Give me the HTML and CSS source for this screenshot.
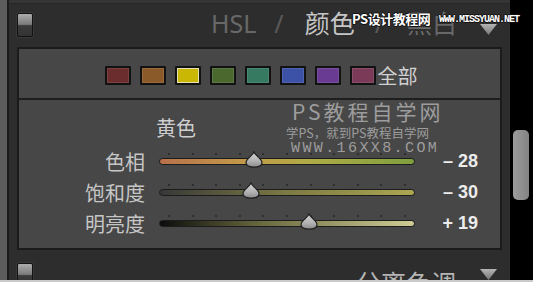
FILE: index.html
```html
<!DOCTYPE html>
<html lang="zh">
<head>
<meta charset="utf-8">
<title>HSL / 颜色 / 黑白</title>
<link rel="stylesheet" href="styles.css">
</head>
<body>
<svg class="defs" width="0" height="0" aria-hidden="true">
  <defs>
    <linearGradient id="thumbfill" x1="0" y1="0" x2="0" y2="1">
      <stop offset="0" stop-color="#d6d6d6"/>
      <stop offset="0.6" stop-color="#b2b2b2"/>
      <stop offset="1" stop-color="#8a8a8a"/>
    </linearGradient>
    <linearGradient id="caretfill" x1="0" y1="0" x2="0" y2="1">
      <stop offset="0" stop-color="#b4b4b4"/>
      <stop offset="1" stop-color="#767676"/>
    </linearGradient>
  </defs>
</svg>
<div class="screen">
  <div class="main">
    <div class="edge"></div>
    <div class="panel">
      <div class="topline"></div>
      <div class="head">
        <span class="toggle"></span>
        <div class="title">
          <span class="t dim">HSL</span>
          <span class="t slash s1">/</span>
          <span class="t on">颜色</span>
          <span class="t slash s2">/</span>
          <span class="t dim bw">黑白</span>
        </div>
        <svg class="caret" viewBox="0 0 17 11" width="17" height="11"><polygon points="0,0 17,0 8.5,11" fill="url(#caretfill)"/></svg>
      </div>
      <div class="box">
        <div class="swatches">
          <div class="swrow">
            <span class="sw c-red"></span>
            <span class="sw c-orange"></span>
            <span class="sw c-yellow sel"></span>
            <span class="sw c-green"></span>
            <span class="sw c-aqua"></span>
            <span class="sw c-blue"></span>
            <span class="sw c-purple"></span>
            <span class="sw c-magenta"></span>
          </div>
          <span class="all">全部</span>
        </div>
        <div class="sliders">
          <div class="group">黄色</div>
          <div class="row">
            <span class="label">色相</span>
            <div class="slider">
              <div class="ticks"><i></i><i></i><i></i><i></i><i></i><i></i><i></i><i></i><i></i><i></i><i></i></div>
              <div class="track hue"></div>
              <svg class="thumb" style="left:86px" viewBox="0 0 18 17" width="18" height="17"><path d="M9 0.8 C10 4.5 17 7.5 17 11.5 C17 14.5 13.5 16.2 9 16.2 C4.5 16.2 1 14.5 1 11.5 C1 7.5 8 4.5 9 0.8 Z" fill="url(#thumbfill)" stroke="#1e1e1e" stroke-width="1.2"/></svg>
            </div>
            <span class="value">– 28</span>
          </div>
          <div class="row">
            <span class="label">饱和度</span>
            <div class="slider">
              <div class="ticks"><i></i><i></i><i></i><i></i><i></i><i></i><i></i><i></i><i></i><i></i><i></i></div>
              <div class="track sat"></div>
              <svg class="thumb" style="left:83px" viewBox="0 0 18 17" width="18" height="17"><path d="M9 0.8 C10 4.5 17 7.5 17 11.5 C17 14.5 13.5 16.2 9 16.2 C4.5 16.2 1 14.5 1 11.5 C1 7.5 8 4.5 9 0.8 Z" fill="url(#thumbfill)" stroke="#1e1e1e" stroke-width="1.2"/></svg>
            </div>
            <span class="value">– 30</span>
          </div>
          <div class="row">
            <span class="label">明亮度</span>
            <div class="slider">
              <div class="ticks"><i></i><i></i><i></i><i></i><i></i><i></i><i></i><i></i><i></i><i></i><i></i></div>
              <div class="track lum"></div>
              <svg class="thumb" style="left:141px" viewBox="0 0 18 17" width="18" height="17"><path d="M9 0.8 C10 4.5 17 7.5 17 11.5 C17 14.5 13.5 16.2 9 16.2 C4.5 16.2 1 14.5 1 11.5 C1 7.5 8 4.5 9 0.8 Z" fill="url(#thumbfill)" stroke="#1e1e1e" stroke-width="1.2"/></svg>
            </div>
            <span class="value">+ 19</span>
          </div>
        </div>
        <div class="wm wm-a">PS教程自学网</div>
        <div class="wm wm-b">学PS，就到PS教程自学网</div>
        <div class="wm wm-c">WWW.16XX8.COM</div>
      </div>
      <div class="head head2">
        <span class="toggle"></span>
        <div class="title title2">
          <span class="t sub">分离色调</span>
        </div>
        <svg class="caret caret2" viewBox="0 0 17 11" width="17" height="11"><polygon points="0,0 17,0 8.5,11" fill="url(#caretfill)"/></svg>
      </div>
    </div>
    <div class="scroll"><div class="bar"></div></div>
  </div>
  <div class="bottomline"></div>
  <div class="stamp">PS设计教程网</div>
  <div class="stamp-url">WWW.MISSYUAN.NET</div>
</div>
</body>
</html>
```

FILE: styles.css
```css
* { box-sizing: border-box; }
html, body { margin: 0; padding: 0; background: #000; }
body {
  width: 533px;
  height: 282px;
  overflow: hidden;
  font-family: "Noto Sans", "Noto Sans CJK SC", sans-serif;
}
.defs { display: block; width: 0; height: 0; }

.screen {
  position: relative;
  width: 533px;
  height: 282px;
  display: flex;
  flex-direction: column;
  overflow: hidden;
}
.main {
  display: flex;
  height: 280px;
  overflow: hidden;
}
.edge { width: 7px; flex: none; background: #5c5c5c; }
.panel {
  width: 503px;
  flex: none;
  background: #2d2d2d;
  border-left: 2px solid #1c1c1c;
  padding: 0 8px;
}
.topline {
  height: 4px;
  margin: 0 -8px;
  background: #353535;
  border-bottom: 1px solid #262626;
}

/* section headers */
.head {
  height: 43px;
  display: flex;
  align-items: flex-start;
  padding-top: 9px;
}
.toggle {
  flex: none;
  width: 16px;
  height: 24px;
  border: 1px solid #121212;
  border-radius: 2px;
  background: linear-gradient(#acacac, #7c7c7c 47%, #3b3b3b 53%, #333333);
  box-shadow: 0 0 0 1px #383838;
}
.title {
  margin-left: auto;
  margin-top: -2px;
  display: flex;
  align-items: baseline;
  font-size: 25px;
  line-height: 25px;
}
.t { white-space: nowrap; }
.t.dim { color: #686868; }
.t.slash { color: #5a5a5a; }
.t.on { color: #c6c6c6; }
.s1 { margin-left: 18px; }
.t.on { margin-left: 21px; }
.s2 { margin-left: 20px; }
.bw { margin-left: 23px; }
.caret {
  flex: none;
  margin-left: 23px;
  margin-top: 11px;
  margin-right: 5px;
}

.head2 { height: 40px; padding-top: 13px; }
.title2 { margin-top: 8px; }
.t.sub { color: #b6b6b6; }
.caret2 { margin-left: 24px; margin-top: 6px; }

/* inner box */
.box {
  position: relative;
  height: 203px;
  border: 2px solid #1b1b1b;
  background: #474747;
}
.swatches {
  height: 51px;
  border-bottom: 2px solid #1e1e1e;
  padding: 4px 0 0 3px;
  display: flex;
  align-items: center;
  justify-content: center;
}
.swrow { display: flex; gap: 9px; }
.sw {
  width: 26px;
  height: 19px;
  border: 2px solid #121212;
  border-radius: 1px;
  box-shadow: inset 0 0 0 1px rgba(255, 255, 255, 0.1);
}
.sw.sel { box-shadow: inset 0 0 0 1px #e4e0b4; }
.c-red { background: #6c2d2f; }
.c-orange { background: #8b5a29; }
.c-yellow { background: #c9b703; }
.c-green { background: #4b692f; }
.c-aqua { background: #367a62; }
.c-blue { background: #3c52a6; }
.c-purple { background: #6a3b93; }
.c-magenta { background: #7b3a57; }
.all {
  margin-left: 2px;
  font-family: "Noto Sans CJK SC", sans-serif;
  font-size: 20px;
  line-height: 20px;
  color: #d0d0d0;
}

/* sliders */
.sliders { padding-top: 18px; }
.group {
  height: 20px;
  margin-bottom: 8px;
  padding-left: 137px;
  font-family: "Noto Sans CJK SC", sans-serif;
  font-size: 20px;
  line-height: 20px;
  color: #cfcfcf;
}
.row {
  height: 31px;
  display: flex;
  align-items: center;
}
.label {
  width: 126px;
  margin-right: 14px;
  text-align: right;
  font-family: "Noto Sans CJK SC", sans-serif;
  font-size: 20px;
  line-height: 20px;
  color: #c6c6c6;
}
.slider {
  position: relative;
  width: 256px;
  align-self: stretch;
}
.ticks {
  margin-top: 7px;
  height: 2px;
  padding: 0 9px;
  display: flex;
  justify-content: space-between;
}
.ticks i { width: 2px; height: 2px; background: #2e2e2e; }
.track {
  margin-top: 3px;
  height: 7px;
  border: 1px solid #1c1c1c;
  border-radius: 4px;
}
.track.hue { background: linear-gradient(to right, #b8714c, #c29c48 35%, #aeab46 60%, #7f9f3f); }
.track.sat { background: linear-gradient(to right, #383838, #7c7a44 50%, #aca752); }
.track.lum { background: linear-gradient(to right, #0c0c0c, #6a6a40 40%, #cfcd95); }
.thumb { position: absolute; top: 5px; }
.value {
  width: 63px;
  text-align: right;
  font-family: "Liberation Sans", sans-serif;
  font-weight: bold;
  font-size: 18px;
  color: #ececec;
  white-space: nowrap;
}

/* watermarks */
.wm {
  position: absolute;
  white-space: nowrap;
  color: #9d9d9d;
  font-family: "Noto Sans CJK SC", sans-serif;
}
.wm-a { left: 273px; top: 52px; font-size: 21px; line-height: 21px; letter-spacing: 3px; }
.wm-b { left: 267px; top: 77px; font-size: 12.5px; line-height: 13px; }
.wm-c {
  left: 272px;
  top: 92px;
  font-family: "Liberation Mono", monospace;
  font-size: 15px;
  line-height: 15px;
  letter-spacing: 2.4px;
}
.stamp {
  position: absolute;
  left: 352px;
  top: 11px;
  font-family: "Noto Sans CJK SC", sans-serif;
  font-weight: bold;
  font-size: 13px;
  line-height: 15px;
  letter-spacing: -0.5px;
  color: #fff;
  text-shadow: 1px 0 #111, -1px 0 #111, 0 1px #111, 0 -1px #111;
}
.stamp-url {
  position: absolute;
  left: 439px;
  top: 15px;
  font-family: "Liberation Mono", monospace;
  font-weight: bold;
  font-size: 10px;
  line-height: 10px;
  letter-spacing: -1px;
  color: #fff;
  text-shadow: 1px 0 #111, -1px 0 #111, 0 1px #111, 0 -1px #111;
}

/* scrollbar */
.scroll {
  flex: 1;
  background: #000;
  padding: 130px 0 0 3px;
}
.bar {
  width: 16px;
  height: 70px;
  border-radius: 5px;
  background: linear-gradient(to right, #9c9c9c, #838383);
}
.bottomline { height: 2px; background: #cbcbcb; }
```
